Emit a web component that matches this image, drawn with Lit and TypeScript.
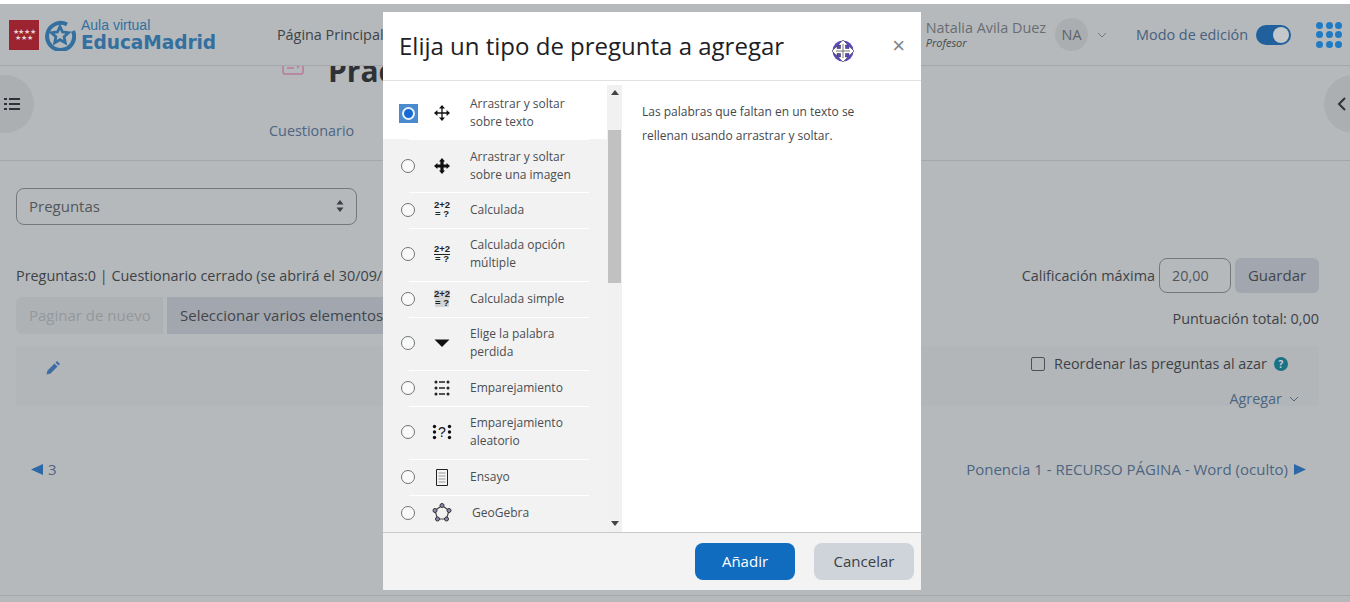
import { LitElement, html, css, svg } from 'lit';
import { customElement } from 'lit/decorators.js';

type Row = { label: string[]; icon: string };

const ROWS: Row[] = [
  { label: ['Arrastrar y soltar', 'sobre texto'], icon: 'move' },
  { label: ['Arrastrar y soltar', 'sobre una imagen'], icon: 'moveBold' },
  { label: ['Calculada'], icon: 'calc' },
  { label: ['Calculada opción', 'múltiple'], icon: 'calcMulti' },
  { label: ['Calculada simple'], icon: 'calcSimple' },
  { label: ['Elige la palabra', 'perdida'], icon: 'caret' },
  { label: ['Emparejamiento'], icon: 'match' },
  { label: ['Emparejamiento', 'aleatorio'], icon: 'random' },
  { label: ['Ensayo'], icon: 'essay' },
  { label: ['GeoGebra'], icon: 'geo' }
];

const arrows = (w: number) => svg`
  <path d="M10 4v12M4 10h12" stroke="#111" stroke-width="${w}" fill="none"/>
  <path d="M10 2l3 3.400H7zM10 18l3-3.400H7zM2 10l3.400-3v6zM18 10l-3.400-3v6z" fill="#111"/>`;

const ICONS: Record<string, unknown> = {
  move: html`<svg width="20" height="20" viewBox="0 0 20 20">${arrows(1.3)}</svg>`,
  moveBold: html`<svg width="20" height="20" viewBox="0 0 20 20">${arrows(3.2)}</svg>`,
  calc: html`<span class="calc"><b>2+2</b><b>= ?</b></span>`,
  calcMulti: html`<span class="calc ruled"><b>2+2</b><b>= ?</b></span>`,
  calcSimple: html`<span class="calc smudged"><b>2+2</b><b>= ?</b></span>`,
  caret: html`<svg width="20" height="20" viewBox="0 0 20 20"><path d="M2.500 6.500h15L10 14z" fill="#111"/></svg>`,
  match: html`<svg width="20" height="20" viewBox="0 0 20 20" fill="#222">
    <circle cx="4" cy="4" r="1.500"/><circle cx="4" cy="10" r="1.500"/><circle cx="4" cy="16" r="1.500"/>
    <circle cx="16" cy="4" r="1.500"/><circle cx="16" cy="10" r="1.500"/><circle cx="16" cy="16" r="1.500"/>
    <path d="M7 3.300h6v1.400H7zM7 9.300h6v1.400H7zM7 15.300h6v1.400H7z"/>
  </svg>`,
  random: html`<svg width="20" height="20" viewBox="0 0 20 20" fill="#111">
    <circle cx="2.500" cy="4.500" r="1.700"/><circle cx="2.500" cy="10" r="1.700"/><circle cx="2.500" cy="15.500" r="1.700"/>
    <circle cx="17.500" cy="4.500" r="1.700"/><circle cx="17.500" cy="10" r="1.700"/><circle cx="17.500" cy="15.500" r="1.700"/>
    <text x="10" y="15" text-anchor="middle" font-family="Liberation Sans" font-size="14">?</text>
  </svg>`,
  essay: html`<svg width="20" height="20" viewBox="0 0 20 20">
    <path d="M4.500 2.500h11v16h-11z" fill="#f4f4f4" stroke="#222" stroke-width="1"/>
    <path d="M6.500 6h7M6.500 9h7M6.500 12h7M6.500 15h7" stroke="#999" stroke-width="1"/>
  </svg>`,
  geo: html`<svg width="20" height="20" viewBox="0 0 20 20">
    <path d="M10 2.500l7 5-2.500 8.500H5.500L3 7.500z" fill="none" stroke="#444" stroke-width="1.200"/>
    <g fill="#8e8bb0" stroke="#333" stroke-width="1">
      <circle cx="10" cy="2.500" r="2"/><circle cx="17" cy="7.500" r="2"/><circle cx="14.500" cy="16" r="2"/>
      <circle cx="5.500" cy="16" r="2"/><circle cx="3" cy="7.500" r="2"/>
    </g>
  </svg>`
};

@customElement('app-root')
export class AppRoot extends LitElement {
  static styles = css`
    :host {
      display: block;
      position: relative;
      width: 1350px;
      height: 602px;
      overflow: hidden;
      background: #b5b9bc;
      color: #3e4246;
      font: 14.400px/20px 'Open Sans', sans-serif;
    }
    .strip {
      height: 4px;
      background: #fff;
    }
    header {
      position: relative;
      z-index: 1;
      height: 61px;
      display: flex;
      align-items: center;
      padding: 0 8px 0 9px;
      background: #b5b9bc;
      border-bottom: 1px solid #a4a8ab;
    }
    .flag {
      width: 30px;
      height: 30px;
      background: #9c2430;
      color: #e8d6d6;
      font: 7px/6px 'Liberation Sans', sans-serif;
      letter-spacing: -0.3px;
      display: grid;
      place-content: center;
      text-align: center;
    }
    .ring {
      margin-left: 5px;
    }
    .brand {
      margin-left: 5px;
      color: #33709f;
      display: flex;
      flex-direction: column;
    }
    .brand small {
      font: 14px/15px 'Liberation Sans', sans-serif;
    }
    .brand b {
      font: bold 18.600px/19px 'DejaVu Sans', sans-serif;
      letter-spacing: -0.1px;
    }
    .nav {
      margin-left: 61px;
      white-space: nowrap;
    }
    .right {
      margin-left: auto;
      display: flex;
      align-items: center;
    }
    .user {
      display: flex;
      flex-direction: column;
      color: #696d71;
      line-height: 16px;
    }
    .user i {
      font-size: 11px;
      line-height: 13px;
      color: #474b4f;
    }
    .avatar {
      width: 33px;
      height: 33px;
      margin-left: 9px;
      border-radius: 50%;
      background: #abaeb1;
      display: grid;
      place-items: center;
      color: #5f6367;
    }
    .chev {
      margin-left: 9px;
    }
    .mode {
      margin-left: 29px;
      color: #47607f;
    }
    .toggle {
      width: 35px;
      height: 20px;
      margin-left: 8px;
      box-sizing: border-box;
      border-radius: 10px;
      background: #20609c;
      display: flex;
      justify-content: flex-end;
      align-items: center;
      padding-right: 2px;
    }
    .toggle span {
      width: 16px;
      height: 16px;
      border-radius: 50%;
      background: #c4c8cb;
    }
    .apps {
      margin-left: 25px;
      display: grid;
      grid-template-columns: repeat(3, 7px);
      gap: 2.500px;
    }
    .apps span {
      width: 7px;
      height: 7px;
      border-radius: 50%;
      background: #1f7cc4;
    }
    .title {
      height: 30px;
      overflow: hidden;
      display: flex;
      gap: 24px;
      padding-left: 282px;
    }
    .title svg {
      margin-top: -8px;
    }
    .title h1 {
      margin: -13px 0 0;
      font: bold 30px/36px 'Open Sans', sans-serif;
      color: #2e3236;
    }
    .tabs {
      height: 65px;
      box-sizing: border-box;
      padding: 25px 0 0 269px;
      color: #4d6582;
      border-bottom: 1px solid #a4a8ab;
    }
    main {
      padding: 27px 31px 0 16px;
    }
    .select {
      width: 341px;
      height: 37px;
      box-sizing: border-box;
      border: 1px solid #74787c;
      border-radius: 8px;
      padding: 0 12px 2px;
      font-size: 15px;
      color: #53575b;
      display: flex;
      align-items: center;
      justify-content: space-between;
    }
    .line {
      display: flex;
      justify-content: space-between;
      align-items: center;
    }
    .grades {
      margin-top: 33px;
      height: 35px;
    }
    .grade {
      display: flex;
      align-items: center;
    }
    .grade .input {
      width: 72px;
      height: 35px;
      margin-left: 4px;
      box-sizing: border-box;
      border: 1px solid #74787c;
      border-radius: 8px;
      padding-left: 12px;
      line-height: 33px;
      color: #53575b;
    }
    .grade button {
      width: 84px;
      height: 35px;
      margin-left: 4px;
      border: 0;
      border-radius: 6px;
      padding: 0 0 2px;
      background: #a2a6ae;
      color: #42464a;
      font: 15px 'Open Sans', sans-serif;
    }
    .actions {
      margin-top: 4px;
      height: 37px;
    }
    .actions > span {
      padding-top: 6px;
    }
    .actions .btns {
      display: flex;
      gap: 4px;
      font-size: 15px;
    }
    .btns span {
      height: 37px;
      line-height: 37px;
      padding: 0 13px;
    }
    .off {
      width: 147px;
      box-sizing: border-box;
      background: #aeb2b5;
      color: #94989c;
      border-radius: 6px 0 0 6px;
      white-space: nowrap;
    }
    .on {
      background: #a2a6ae;
      color: #42464a;
      white-space: nowrap;
    }
    .panel {
      margin-top: 12px;
      height: 60px;
      box-sizing: border-box;
      background: #b2b6b9;
      padding: 8px 20px 0 29px;
      display: flex;
      justify-content: space-between;
    }
    .panel > svg {
      margin-top: 6px;
    }
    .opts {
      display: flex;
      flex-direction: column;
      align-items: flex-end;
      gap: 15px;
    }
    .opts div {
      display: flex;
      align-items: center;
    }
    .reorder {
      margin-right: 11px;
    }
    .check {
      width: 12px;
      height: 12px;
      margin-right: 9px;
      border: 1px solid #4e5256;
      border-radius: 2px;
    }
    .help {
      width: 14px;
      height: 14px;
      margin-left: 7px;
      border-radius: 50%;
      background: #1a7285;
      color: #ccd;
      font: bold 10px/14px 'Open Sans', sans-serif;
      text-align: center;
    }
    .add {
      color: #4d6582;
      gap: 7px;
    }
    .pager {
      margin-top: 52px;
      padding: 1px 13px 0 15px;
      color: #4d6582;
      font-size: 15px;
    }
    .pager span {
      display: flex;
      align-items: center;
      gap: 5px;
    }
    .pager span:last-child {
      gap: 6px;
    }
    .foot {
      position: absolute;
      left: 0;
      right: 0;
      top: 595px;
      border-top: 1px solid #a4a8ab;
    }
    .side {
      position: absolute;
      top: 75px;
      width: 58px;
      height: 58px;
      border-radius: 50%;
      background: #abafb2;
      display: flex;
      align-items: center;
    }
    .side.l {
      left: -24px;
      justify-content: flex-end;
    }
    .side.l svg {
      margin-right: 14px;
    }
    .side.r {
      left: 1324px;
      padding-left: 13px;
      box-sizing: border-box;
    }
    .dialog {
      position: absolute;
      z-index: 2;
      left: 383px;
      top: 12px;
      width: 538px;
      height: 578px;
      background: #fff;
      display: grid;
      grid-template-rows: 69px 1fr 58px;
      color: #3b3f43;
    }
    .dialog-head {
      border-bottom: 1px solid #dfe1e3;
      display: flex;
      align-items: center;
      padding: 0 16px;
      justify-content: space-between;
    }
    .dialog-head h2 {
      margin: 0;
      font: 400 24px/30px 'Open Sans', sans-serif;
      color: #1d2125;
      white-space: nowrap;
    }
    .close {
      color: #808488;
      font: 22px/22px 'Liberation Sans', sans-serif;
    }
    .dialog-body {
      min-height: 0;
      display: grid;
      grid-template-columns: 239px 1fr;
    }
    .list-wrap {
      display: grid;
      grid-template-columns: 224px 15px;
      padding-top: 4px;
      overflow: hidden;
    }
    .list {
      background: #f2f2f2;
    }
    .row {
      display: grid;
      grid-template-columns: 33px 38px 1fr;
      align-items: center;
      box-sizing: border-box;
      height: 53px;
      padding: 0 0 1px 16px;
      font-size: 12px;
      line-height: 18px;
      color: #4a4e52;
      position: relative;
    }
    .row.one {
      height: 36px;
    }
    .row.sel {
      background: #fff;
      height: 54px;
      padding: 2px 0 0 16px;
    }
    .row.sel + .row {
      padding: 1px 0 0 16px;
    }
    .row + .row::before {
      content: '';
      position: absolute;
      left: 26px;
      width: 180px;
      top: 0;
      border-top: 1px solid #fff;
    }
    .radio {
      width: 14px;
      height: 14px;
      margin-left: 2px;
      box-sizing: border-box;
      border: 1px solid #6f7377;
      border-radius: 50%;
      background: #fafafa;
    }
    .sel .radio {
      width: 19px;
      height: 19px;
      margin-left: 0;
      border: 0;
      border-radius: 0;
      background: #4a8bd0;
      display: grid;
      place-items: center;
    }
    .sel .radio::after {
      content: '';
      width: 9px;
      height: 9px;
      border-radius: 50%;
      background: #1668d6;
      border: 2px solid #e8f1fb;
    }
    .row .ico {
      display: grid;
      place-items: center;
      width: 20px;
      height: 20px;
    }
    .calc {
      display: flex;
      flex-direction: column;
      align-items: center;
      font: bold 9.500px/8px 'Liberation Sans', sans-serif;
      color: #222;
    }
    .calc b:first-child {
      padding-bottom: 1px;
    }
    .calc.ruled b:first-child {
      border-bottom: 1px solid #222;
    }
    .calc.smudged b {
      background: #d4d4d4;
    }
    .geo-label {
      margin-left: 2px;
    }
    .track {
      background: #f1f1f1;
      position: relative;
      display: flex;
      flex-direction: column;
      justify-content: space-between;
      align-items: center;
      padding: 5px 0 6px;
    }
    .thumb {
      position: absolute;
      left: 1px;
      right: 1px;
      top: 45px;
      height: 153px;
      background: #c1c1c1;
    }
    .up {
      border: 4px solid transparent;
      border-top: 0;
      border-bottom: 5px solid #444;
    }
    .down {
      border: 4px solid transparent;
      border-bottom: 0;
      border-top: 5px solid #444;
    }
    .desc {
      padding: 19px 40px 0 20px;
      font-size: 12px;
      line-height: 24px;
      color: #44484c;
    }
    .dialog-foot {
      background: #f3f3f3;
      border-top: 1px solid #c8c8c8;
      display: flex;
      justify-content: flex-end;
      align-items: center;
      gap: 19px;
      padding-right: 7px;
    }
    .dialog-foot button {
      width: 100px;
      height: 37px;
      border: 0;
      border-radius: 8px;
      padding: 0 0 2px;
      font: 15px 'Open Sans', sans-serif;
    }
    .primary {
      background: #0f6cbf;
      color: #fff;
    }
    .secondary {
      background: #ced4da;
      color: #3b4045;
    }
    .cursor {
      position: absolute;
      z-index: 3;
      left: 831px;
      top: 39px;
    }
  `;

  render() {
    return html`
      <div class="strip"></div>
      <header>
        <span class="flag"><span>★★★★<br />★★★</span></span>
        <svg class="ring" width="32" height="32" viewBox="0 0 32 32" fill="none" stroke="#33709f">
          <path d="M23 5.500A13.500 13.500 0 1 0 29 12" stroke-width="4" />
          <path d="M16 7.500l2.500 5.500 6 .7-4.400 4 1.200 6L16 20.700l-5.300 3 1.200-6-4.400-4 6-.7z" stroke-width="2.800" />
        </svg>
        <span class="brand"><small>Aula virtual</small><b>EducaMadrid</b></span>
        <span class="nav">Página Principal</span>
        <div class="right">
          <span class="user">Natalia Avila Duez<i>Profesor</i></span>
          <span class="avatar">NA</span>
          <svg class="chev" width="10" height="6" viewBox="0 0 10 6" fill="none" stroke="#74787c"><path d="M1 1l4 4 4-4" /></svg>
          <span class="mode">Modo de edición</span>
          <span class="toggle"><span></span></span>
          <span class="apps">${Array.from({ length: 9 }, () => html`<span></span>`)}</span>
        </div>
      </header>
      <div class="title">
        <svg width="22" height="18" viewBox="0 0 22 18" fill="none" stroke="#b97a96" stroke-width="1.500">
          <path d="M1 1h20v13a2 2 0 0 1-2 2H3a2 2 0 0 1-2-2z" />
          <path d="M5 10h7M15 10l2-2" />
        </svg>
        <h1>Práctica</h1>
      </div>
      <div class="tabs">Cuestionario</div>
      <main>
        <div class="select">
          Preguntas
          <svg width="8" height="12" viewBox="0 0 8 12" fill="#3a3e42"><path d="M4 0l3.500 4.500h-7zM4 12L.5 7.500h7z" /></svg>
        </div>
        <div class="line grades">
          <span>Preguntas:0 | Cuestionario cerrado (se abrirá el 30/09/2022)</span>
          <div class="grade">
            Calificación máxima
            <span class="input">20,00</span>
            <button>Guardar</button>
          </div>
        </div>
        <div class="line actions">
          <div class="btns"><span class="off">Paginar de nuevo</span><span class="on">Seleccionar varios elementos</span></div>
          <span>Puntuación total: 0,00</span>
        </div>
        <div class="panel">
          <svg width="16" height="16" viewBox="0 0 16 16" fill="#3f6ca3"><path d="M12 1l3 3-1.500 1.500-3-3zM9.500 3.500l3 3-7 7-4 1 1-4z" /></svg>
          <div class="opts">
            <div class="reorder"><span class="check"></span>Reordenar las preguntas al azar<span class="help">?</span></div>
            <div class="add">
              Agregar
              <svg width="10" height="6" viewBox="0 0 10 6" fill="none" stroke="#4d6582"><path d="M1 1l4 4 4-4" /></svg>
            </div>
          </div>
        </div>
        <div class="line pager">
          <span>
            <svg width="12" height="11" viewBox="0 0 12 11" fill="#2c67a6"><path d="M0 5.500L12 0v11z" /></svg>
            3
          </span>
          <span>
            Ponencia 1 - RECURSO PÁGINA - Word (oculto)
            <svg width="12" height="11" viewBox="0 0 12 11" fill="#2c67a6"><path d="M12 5.500L0 0v11z" /></svg>
          </span>
        </div>
      </main>
      <div class="foot"></div>
      <div class="side l">
        <svg width="16" height="14" viewBox="0 0 16 14" fill="#2f3337"><path d="M0 1h3v2H0zM5 1h11v2H5zM0 6h3v2H0zM5 6h11v2H5zM0 11h3v2H0zM5 11h11v2H5z" /></svg>
      </div>
      <div class="side r">
        <svg width="10" height="16" viewBox="0 0 10 16" fill="none" stroke="#2f3337" stroke-width="2"><path d="M8 2L2 8l6 6" /></svg>
      </div>

      <section class="dialog">
        <div class="dialog-head">
          <h2>Elija un tipo de pregunta a agregar</h2>
          <span class="close">×</span>
        </div>
        <div class="dialog-body">
          <div class="list-wrap">
            <div class="list">${ROWS.map((r, i) => this.renderRow(r, i))}</div>
            <div class="track"><span class="up"></span><span class="thumb"></span><span class="down"></span></div>
          </div>
          <div class="desc">Las palabras que faltan en un texto se rellenan usando arrastrar y soltar.</div>
        </div>
        <div class="dialog-foot">
          <button class="primary">Añadir</button>
          <button class="secondary">Cancelar</button>
        </div>
      </section>

      <svg class="cursor" width="24" height="24" viewBox="0 0 24 24">
        <circle cx="12" cy="12" r="10.500" fill="#5a48b8" />
        <path d="M12 1l5 5h-2.500v3.500H18V7l5 5-5 5v-2.500h-3.500V18H17l-5 5-5-5h2.500v-3.500H6V17l-5-5 5-5v2.500h3.500V6H7z" fill="#fff" stroke="#3a3a4a" stroke-width=".6" />
        <path d="M12 5v14M5 12h14" stroke="#555" stroke-width=".8" />
      </svg>
    `;
  }

  renderRow(r: Row, i: number) {
    const cls = [r.label.length === 1 ? 'one' : '', i === 0 ? 'sel' : ''].join(' ');
    return html`<div class="row ${cls}">
      <span class="radio"></span>
      <span class="ico">${ICONS[r.icon]}</span>
      <span class=${r.icon === 'geo' ? 'geo-label' : ''}>${r.label.map((l) => html`${l}<br />`)}</span>
    </div>`;
  }
}
